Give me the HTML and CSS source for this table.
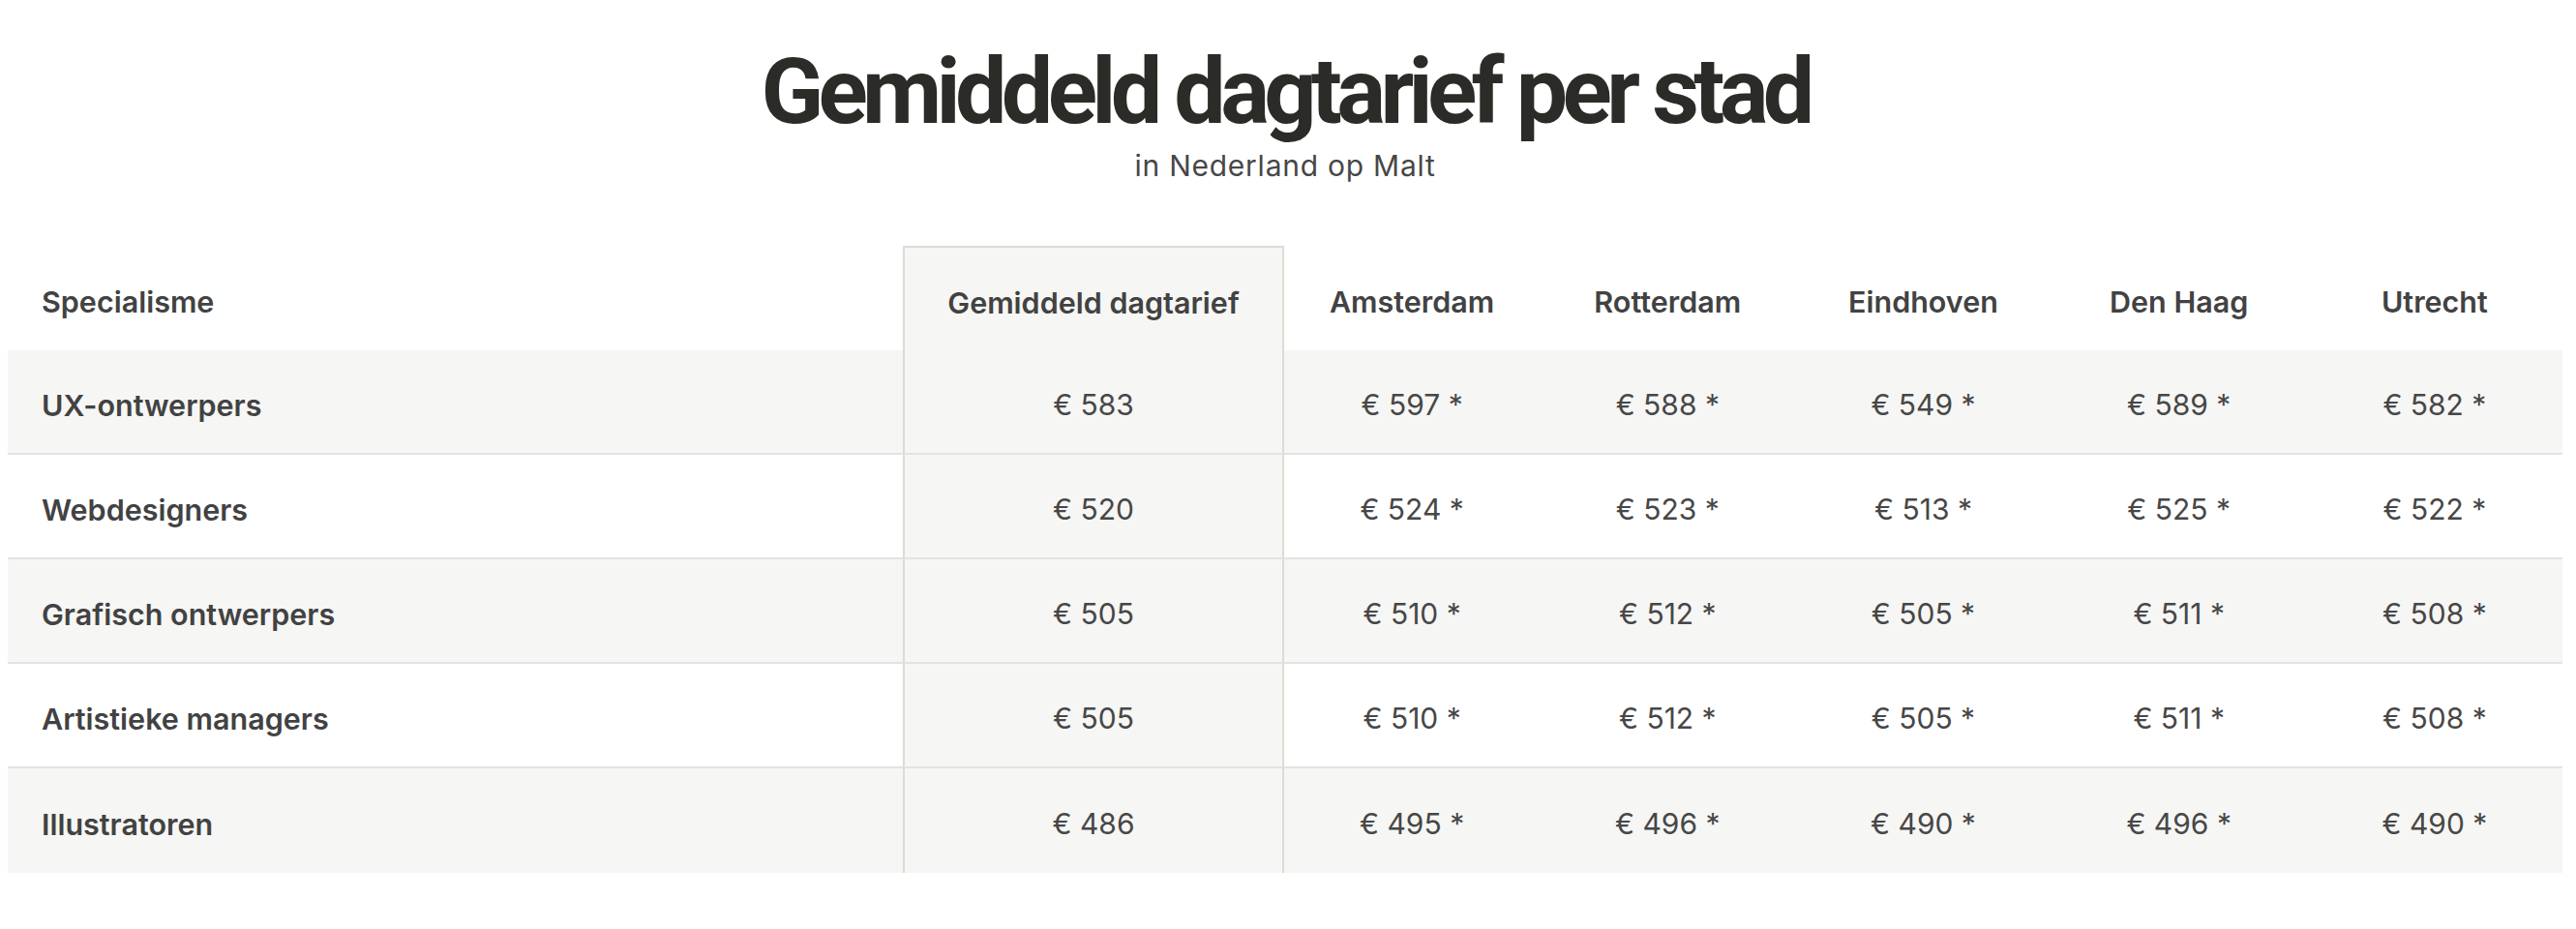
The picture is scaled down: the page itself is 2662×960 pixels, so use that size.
FILE: index.html
```html
<!DOCTYPE html>
<html lang="nl">
<head>
<meta charset="utf-8">
<title>Gemiddeld dagtarief per stad</title>
<link rel="stylesheet" href="styles.css">
</head>
<body>
<main class="page">
  <header class="intro">
    <h1 class="title">Gemiddeld dagtarief per stad</h1>
    <p class="subtitle">in Nederland op Malt</p>
  </header>
  <table class="rates">
    <colgroup>
      <col class="c-spec">
      <col class="c-avg">
      <col class="c-city"><col class="c-city"><col class="c-city"><col class="c-city"><col class="c-city">
    </colgroup>
    <thead>
      <tr>
        <th class="spec">Specialisme</th>
        <th class="avg">Gemiddeld dagtarief</th>
        <th>Amsterdam</th>
        <th>Rotterdam</th>
        <th>Eindhoven</th>
        <th>Den Haag</th>
        <th>Utrecht</th>
      </tr>
    </thead>
    <tbody>
      <tr>
        <th class="spec">UX-ontwerpers</th>
        <td class="avg">€ 583</td>
        <td>€ 597 *</td><td>€ 588 *</td><td>€ 549 *</td><td>€ 589 *</td><td>€ 582 *</td>
      </tr>
      <tr>
        <th class="spec">Webdesigners</th>
        <td class="avg">€ 520</td>
        <td>€ 524 *</td><td>€ 523 *</td><td>€ 513 *</td><td>€ 525 *</td><td>€ 522 *</td>
      </tr>
      <tr>
        <th class="spec">Grafisch ontwerpers</th>
        <td class="avg">€ 505</td>
        <td>€ 510 *</td><td>€ 512 *</td><td>€ 505 *</td><td>€ 511 *</td><td>€ 508 *</td>
      </tr>
      <tr>
        <th class="spec">Artistieke managers</th>
        <td class="avg">€ 505</td>
        <td>€ 510 *</td><td>€ 512 *</td><td>€ 505 *</td><td>€ 511 *</td><td>€ 508 *</td>
      </tr>
      <tr>
        <th class="spec">Illustratoren</th>
        <td class="avg">€ 486</td>
        <td>€ 495 *</td><td>€ 496 *</td><td>€ 490 *</td><td>€ 496 *</td><td>€ 490 *</td>
      </tr>
    </tbody>
  </table>
</main>
</body>
</html>
```

FILE: styles.css
```css
* { box-sizing: border-box; }

html, body {
  margin: 0;
  padding: 0;
  background: #ffffff;
}

body {
  font-family: Inter, "Noto Sans", sans-serif;
  color: #454545;
}

.page {
  width: 2640px;
  margin: 0 0 0 8px;
  padding-top: 47px;
}

.intro {
  text-align: center;
}

.title {
  margin: 0;
  font-family: Roboto, "Liberation Sans", sans-serif;
  font-weight: 700;
  font-size: 95px;
  line-height: 96px;
  letter-spacing: -0.06em;
  color: #2b2b28;
}

.subtitle {
  margin: 10px 0 0;
  font-size: 30px;
  line-height: 36px;
  letter-spacing: 0.75px;
  color: #474747;
}

.rates {
  margin-top: 65px;
  width: 2640px;
  table-layout: fixed;
  border-collapse: separate;
  border-spacing: 0;
}

.c-spec { width: 925px; }
.c-avg { width: 394px; }
.c-city { width: 264.2px; }

.rates th,
.rates td {
  height: 108px;
  padding: 6px 0 0;
  text-align: center;
  vertical-align: middle;
  font-size: 30px;
}

.rates th {
  font-weight: 600;
  font-size: 30.5px;
  color: #424242;
}

.rates td {
  font-weight: 400;
  color: #474747;
}

.rates th.spec {
  text-align: left;
  padding-left: 35px;
}

.rates tbody tr:nth-child(odd) {
  background: #f6f6f4;
}

.rates tbody th,
.rates tbody td {
  border-bottom: 2px solid #e3e3e0;
}

.rates tbody tr:last-child th,
.rates tbody tr:last-child td {
  border-bottom: 0;
}

.rates .avg {
  background: #f6f6f4;
  border-left: 2px solid #dcdcd7;
  border-right: 2px solid #dcdcd7;
}

.rates thead .avg {
  border-top: 2px solid #dcdcd7;
}
```
